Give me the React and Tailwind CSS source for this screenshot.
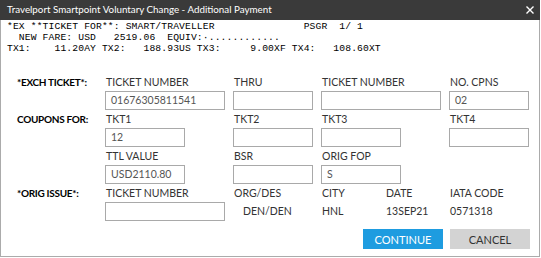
import React from 'react';

const UI = "font-['Segoe_UI',Lato,sans-serif]";

const Field = ({ label, value, w = 'w-[80px]' }) => (
    <div className="flex flex-col">
        <div className="h-[12px] leading-[12px] text-[10.5px] text-[#333] mb-[3px] pl-[1px]">{label}</div>
        <div className={`${w} h-[19px] border border-[#a9a9a9] bg-white flex items-center pl-[5px] text-[10.5px] text-[#555]`}>
            {value}
        </div>
    </div>
);

const Info = ({ label, value, indent = '' }) => (
    <div className="flex flex-col">
        <div className="h-[12px] leading-[12px] text-[10.5px] text-[#333] mb-[3px] pl-[1px]">{label}</div>
        <div className={`h-[19px] flex items-center text-[10.5px] text-[#333] ${indent}`}>{value}</div>
    </div>
);

const RowLabel = ({ children }) => (
    <div className="h-[12px] leading-[12px] text-[10px] tracking-[-0.3px] font-bold text-black">{children}</div>
);

export default function App() {
    const lines = [
        '*EX **TICKET FOR**: SMART/TRAVELLER               PSGR  1/ 1',
        '  NEW FARE: USD   2519.06  EQUIV:·............',
        'TX1:    11.20AY TX2:   188.93US TX3:     9.00XF TX4:   108.60XT',
    ];

    return (
        <div className={`w-[541px] h-[258px] bg-white ${UI}`}>
            <div className="w-[540px] h-[257px] border-l border-r border-b border-[#ababab] flex flex-col">
                {/* title bar */}
                <div className="h-[20px] bg-[#3a3a3a] flex items-center justify-between pl-[7px] pr-[4px] -mx-[1px]">
                    <span className="text-white text-[9.8px] leading-none">Travelport Smartpoint Voluntary Change - Additional Payment</span>
                    <svg width="10" height="10" viewBox="0 0 10 10" className="mr-[1px]">
                        <path d="M1.5 1.5 L8.5 8.5 M8.5 1.5 L1.5 8.5" stroke="#fff" strokeWidth="1.4" />
                    </svg>
                </div>

                {/* terminal text */}
                <pre className="pt-[1px] pl-[6px] font-['Liberation_Mono',monospace] text-[9.7px] tracking-[0.12px] leading-[11px] text-black">
                    {lines.join('\n')}
                </pre>

                {/* form */}
                <div className="mt-[22px] pl-[16px] flex flex-col gap-[3px]">
                    <div className="flex">
                        <div className="w-[88px]"><RowLabel>*EXCH TICKET*:</RowLabel></div>
                        <div className="w-[128px]"><Field label="TICKET NUMBER" value="01676305811541" w="w-[120px]" /></div>
                        <div className="w-[88px]"><Field label="THRU" /></div>
                        <div className="w-[128px]"><Field label="TICKET NUMBER" w="w-[120px]" /></div>
                        <div className="w-[88px]"><Field label="NO. CPNS" value="02" /></div>
                    </div>
                    <div className="flex">
                        <div className="w-[88px]"><RowLabel>COUPONS FOR:</RowLabel></div>
                        <div className="w-[128px]"><Field label="TKT1" value="12" /></div>
                        <div className="w-[88px]"><Field label="TKT2" /></div>
                        <div className="w-[128px]"><Field label="TKT3" /></div>
                        <div className="w-[88px]"><Field label="TKT4" /></div>
                    </div>
                    <div className="flex">
                        <div className="w-[88px]" />
                        <div className="w-[128px]"><Field label="TTL VALUE" value="USD2110.80" /></div>
                        <div className="w-[88px]"><Field label="BSR" /></div>
                        <div className="w-[128px]"><Field label="ORIG FOP" value="S" /></div>
                    </div>
                    <div className="flex">
                        <div className="w-[88px]"><RowLabel>*ORIG ISSUE*:</RowLabel></div>
                        <div className="w-[128px]"><Field label="TICKET NUMBER" w="w-[120px]" /></div>
                        <div className="w-[88px]"><Info label="ORG/DES" value="DEN/DEN" indent="pl-[10px]" /></div>
                        <div className="w-[64px]"><Info label="CITY" value="HNL" indent="pl-[1px]" /></div>
                        <div className="w-[64px]"><Info label="DATE" value="13SEP21" indent="pl-[1px]" /></div>
                        <div className="w-[88px]"><Info label="IATA CODE" value="0571318" indent="pl-[1px]" /></div>
                    </div>
                </div>

                {/* buttons */}
                <div className="mt-[8px] flex justify-end gap-[7px] pr-[9px]">
                    <button className="w-[80px] h-[20px] bg-[#1e9ce0] text-white text-[11px] leading-none">CONTINUE</button>
                    <button className="w-[80px] h-[20px] bg-[#d3d3d3] text-[#333] text-[11px] leading-none">CANCEL</button>
                </div>
            </div>
        </div>
    );
}
